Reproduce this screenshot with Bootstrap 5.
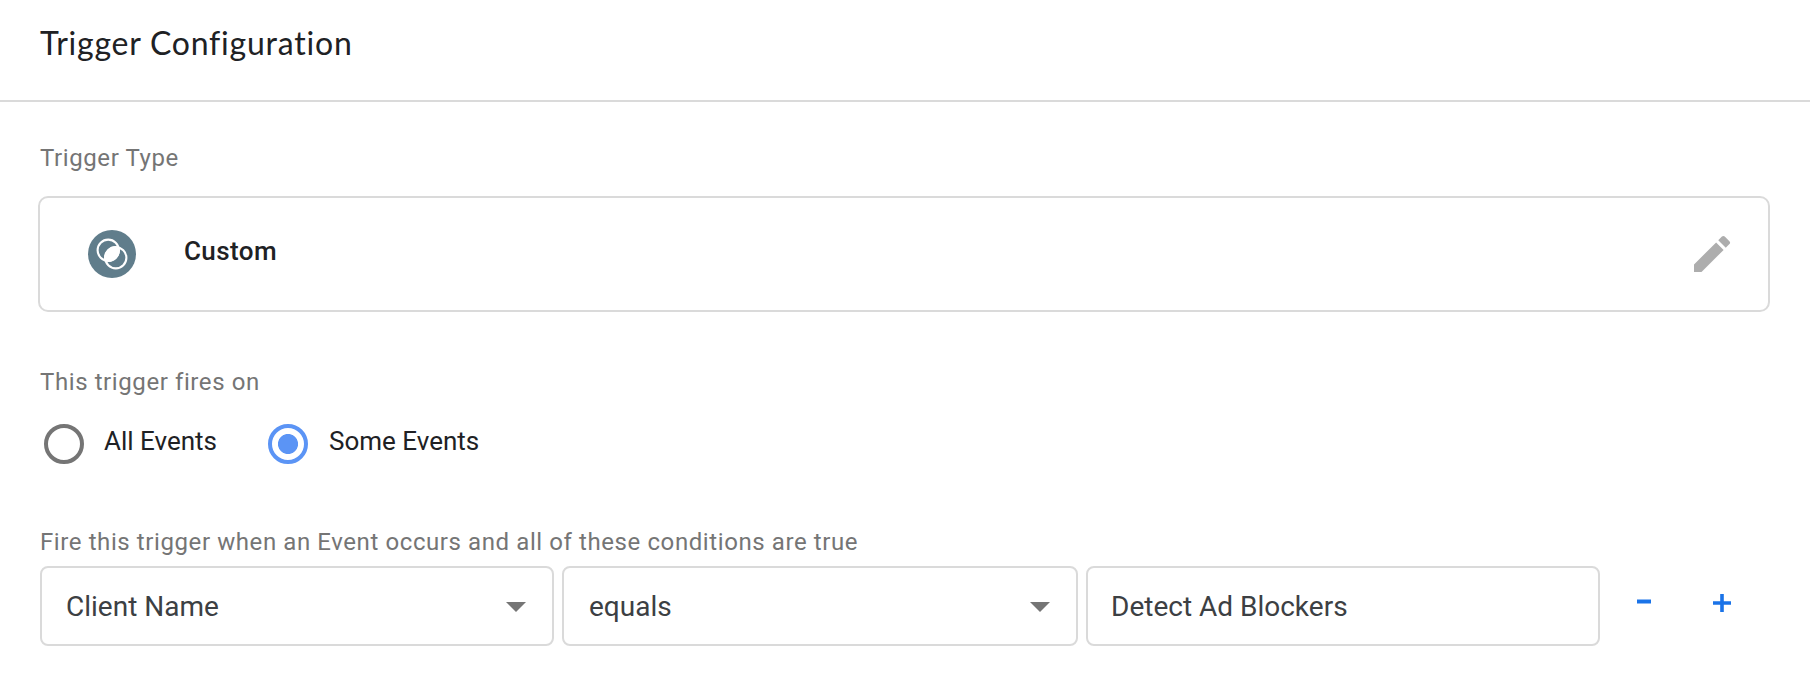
<!DOCTYPE html>
<html lang="en">
<head>
<meta charset="utf-8">
<meta name="viewport" content="width=device-width, initial-scale=1">
<title>Trigger Configuration</title>
<link rel="stylesheet" href="https://cdn.jsdelivr.net/npm/bootstrap@5.3.0/dist/css/bootstrap.min.css">
<style>
  body { font-family: Roboto, sans-serif; color: #202124; background: #fff; overflow: hidden; }
  .panel-header { height: 102px; border-bottom: 2px solid #dadada; padding: 22px 40px 0; }
  .panel-title { font-family: Lato, sans-serif; font-size: 32px; line-height: 42px; font-weight: 400; letter-spacing: .78px; }
  .panel-body { padding: 0 40px; }
  .type-section { padding-top: 40px; }
  .fires-section { padding-top: 54px; }
  .cond-section { padding-top: 62px; }
  .field-label { font-size: 24px; line-height: 32px; letter-spacing: .59px; color: #757575; }
  .type-box { height: 116px; margin: 22px 0 0 -2px; width: 1732px; border: 2px solid #dadada; border-radius: 10px; padding: 0 32px 0 48px; }
  .type-name { font-size: 26px; line-height: 32px; font-weight: 500; letter-spacing: .4px; margin: -7px 0 0 48px; }
  .radio-row { padding: 26px 0 0 4px; }
  .form-check-input.event-radio { width: 40px; height: 40px; margin: 0; border: 4px solid #757575; box-shadow: none; }
  .form-check-input.event-radio:checked { border-color: #5b94f5; background: radial-gradient(circle, #5b94f5 9.6px, #fff 10.4px); }
  .event-label { font-size: 26px; line-height: 32px; margin: -6px 51px 0 20px; }
  .event-radio:checked + .event-label { margin-left: 21px; }
  .cond { width: 514px; height: 80px; border: 2px solid #dadada; border-radius: 8px; font-size: 28px; color: #3c4043; padding: 2px 26px 0 24px; }
  .cond-operator { width: 516px; padding-left: 25px; }
  .cond-value { padding-left: 23px; }
  .step-btn { color: #1a73e8; margin-top: 28px; }
  .step-remove { margin-left: 29px; }
  .step-add { margin-left: 54px; }
</style>
</head>
<body>
<header class="panel-header"><h1 class="panel-title m-0">Trigger Configuration</h1></header>
<main class="panel-body">
  <section class="type-section">
    <div class="field-label">Trigger Type</div>
    <div class="type-box d-flex align-items-center">
      <svg width="48" height="48" viewBox="0 0 48 48" aria-hidden="true">
        <circle cx="24" cy="24" r="24" fill="#607d8b"/>
        <g fill="none" stroke="#fff" stroke-width="2.1"><circle cx="20.2" cy="20.2" r="10.6"/><circle cx="27.8" cy="27.8" r="10.6"/></g>
        <path d="M30.5 17.5A10.6 10.6 0 0 1 17.5 30.5A10.6 10.6 0 0 1 30.5 17.5Z" fill="#fff" stroke="#fff" stroke-width="2.1"/>
      </svg>
      <div class="type-name">Custom</div>
      <svg class="ms-auto" width="48" height="48" viewBox="0 0 24 24" fill="#adadad" aria-hidden="true"><path d="M3 17.25V21h3.75L17.81 9.94l-3.75-3.75L3 17.25zM20.71 7.04a1 1 0 0 0 0-1.41l-2.34-2.34a1 1 0 0 0-1.41 0l-1.83 1.83 3.75 3.75 1.83-1.83z"/></svg>
    </div>
  </section>
  <section class="fires-section">
    <div class="field-label">This trigger fires on</div>
    <div class="radio-row d-flex align-items-center">
      <input class="form-check-input event-radio" type="radio" name="ev" id="all"><label class="event-label" for="all">All Events</label>
      <input class="form-check-input event-radio" type="radio" name="ev" id="some" checked><label class="event-label" for="some">Some Events</label>
    </div>
  </section>
  <section class="cond-section">
    <div class="field-label">Fire this trigger when an Event occurs and all of these conditions are true</div>
    <div class="d-flex align-items-start gap-2 pt-2">
      <div class="cond d-flex align-items-center justify-content-between">Client Name<svg width="20" height="10" viewBox="0 0 20 10"><path d="M0 0h20L10 10z" fill="#757575"/></svg></div>
      <div class="cond cond-operator d-flex align-items-center justify-content-between">equals<svg width="20" height="10" viewBox="0 0 20 10"><path d="M0 0h20L10 10z" fill="#757575"/></svg></div>
      <div class="cond cond-value d-flex align-items-center">Detect Ad Blockers</div>
      <button class="step-btn step-remove btn p-0 border-0 d-flex" aria-label="Remove"><svg width="14" height="18" viewBox="0 0 14 18"><path d="M0 5.5h14v4H0z" fill="currentColor"/></svg></button>
      <button class="step-btn step-add btn p-0 border-0 d-flex" aria-label="Add"><svg width="18" height="18" viewBox="0 0 18 18"><path d="M7.2 0h3.6v7.2H18v3.6h-7.2V18H7.2v-7.2H0V7.2h7.2z" fill="currentColor"/></svg></button>
    </div>
  </section>
</main>
<script src="https://cdn.jsdelivr.net/npm/bootstrap@5.3.0/dist/js/bootstrap.bundle.min.js"></script>
</body>
</html>
